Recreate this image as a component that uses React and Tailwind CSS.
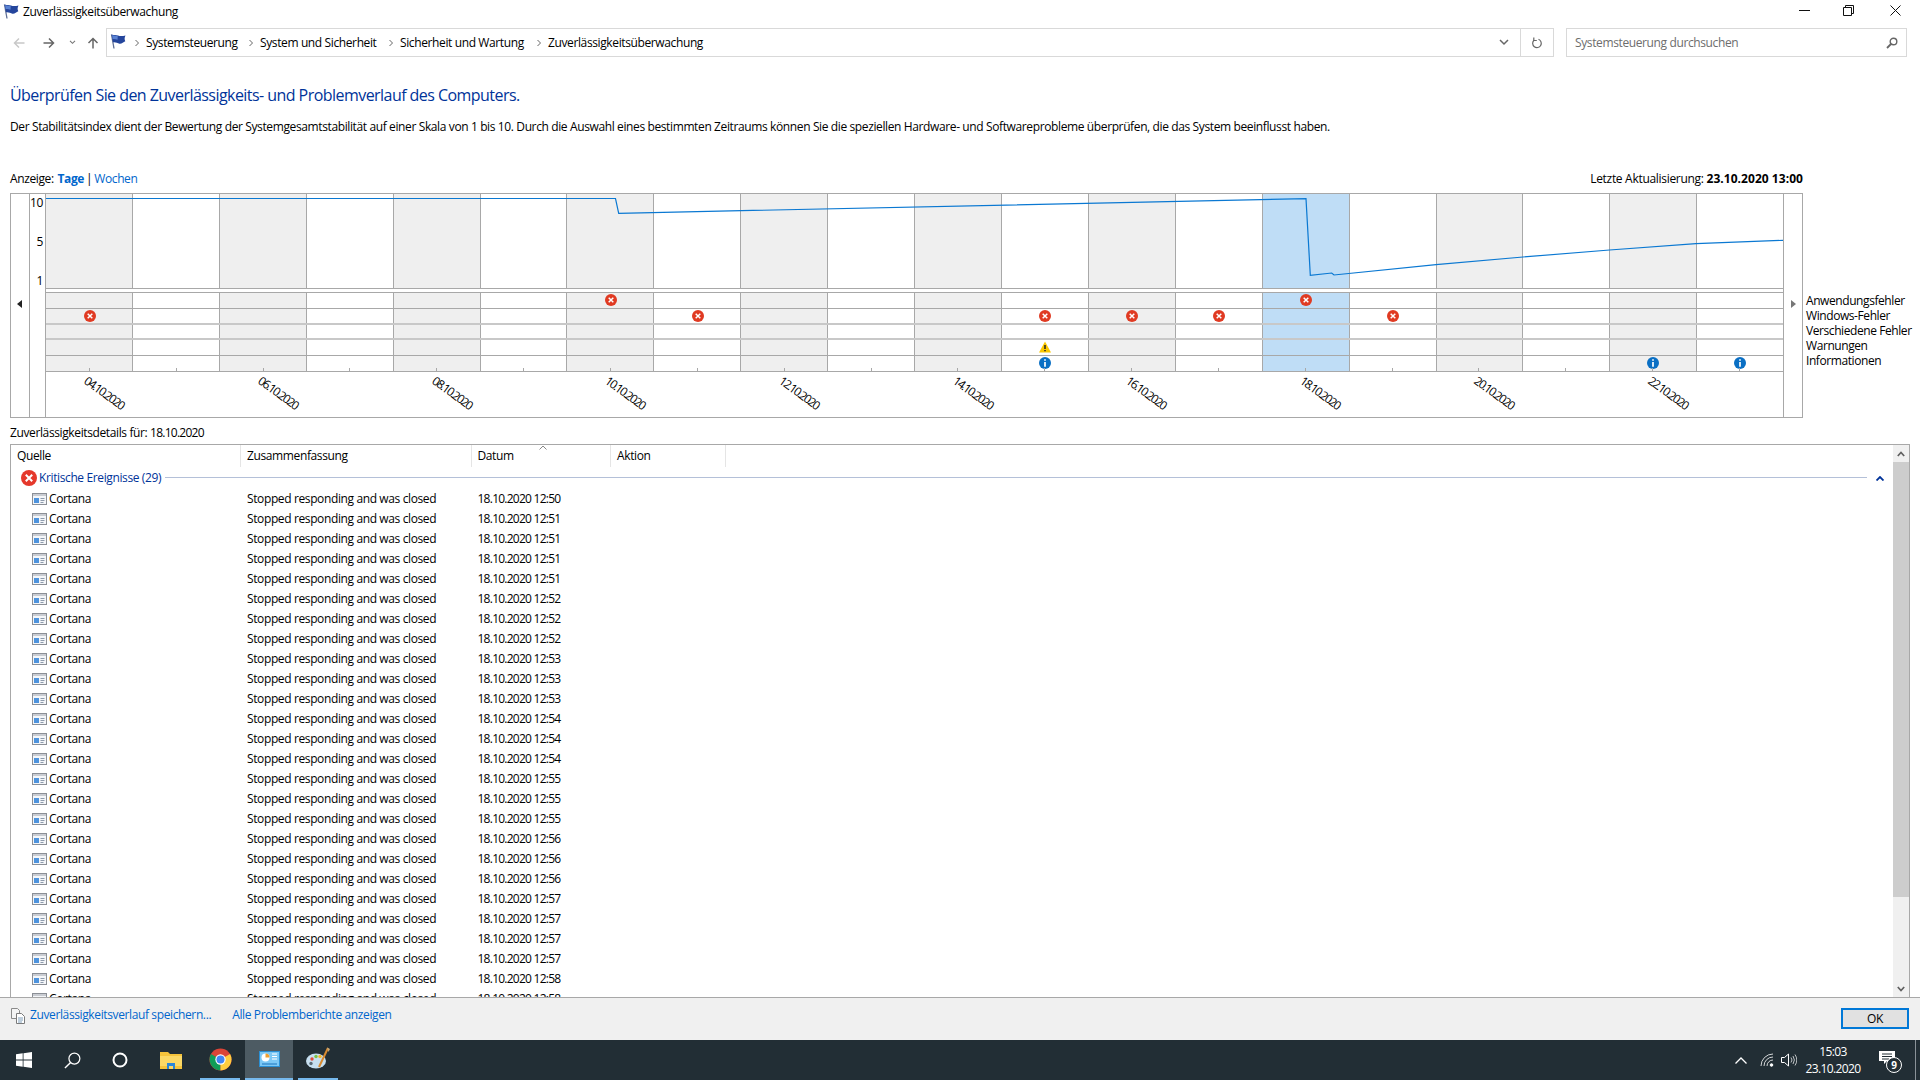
import React from 'react';

const times = ['12:50','12:51','12:51','12:51','12:51','12:52','12:52','12:52','12:53','12:53','12:53','12:54','12:54','12:54','12:55','12:55','12:55','12:56','12:56','12:56','12:57','12:57','12:57','12:57','12:58','12:58'];

const Flag = ({ className }) => (
  <svg viewBox="0 0 16 15" className={className}>
    <path d="M1.500 .5L4 14.500" stroke="#5f6f96" strokeWidth="1.300" />
    <path d="M1.500 .5C4.500 1.500 6 .8 8 1.500c2 .8 4.500.6 7.500 0-1 2-1.200 3.500-.2 5.800-2 .8-3.500 2.700-5.800 2.400C7.500 9.300 5.500 7.800 3 8.300z" fill="#24459c" />
    <path d="M2 1.200c2.500.6 4 .2 5.800 1l-.3 3.600C6 5.100 4.500 4.800 2.700 5.100z" fill="#5a82d2" />
  </svg>
);

const Chev = () => (
  <svg viewBox="0 0 6 8" className="w-[6px] h-[8px] shrink-0">
    <path d="M1.500 1l3 3-3 3" fill="none" stroke="#666" strokeWidth="1" />
  </svg>
);

const ErrorDot = ({ size = 12 }) => (
  <svg viewBox="0 0 12 12" width={size} height={size} className="block">
    <circle cx="6" cy="6" r="6" fill="#e03a22" />
    <path d="M3.700 3.700l4.600 4.600M8.300 3.700l-4.600 4.600" stroke="#fff" strokeWidth="1.500" />
  </svg>
);

const WarnDot = () => (
  <svg viewBox="0 0 12 12" width="12" height="12" className="block">
    <path d="M6 .5L12 11.500H0z" fill="#fcc800" />
    <path d="M6 4v4M6 9v1.300" stroke="#222" strokeWidth="1.500" />
  </svg>
);

const InfoDot = () => (
  <svg viewBox="0 0 12 12" width="12" height="12" className="block">
    <circle cx="6" cy="6" r="6" fill="#0a6fc4" />
    <path d="M6 2.300v1.400M6 5v4.800" stroke="#fff" strokeWidth="1.700" />
  </svg>
);

const Band = ({ i }) => {
  const sel = i === 14;
  const shade = i % 2 === 0;
  const bg = sel ? 'bg-[#bfddf6]' : shade ? 'bg-[#efefef]' : 'bg-white';
  return <div className={`flex-1 h-full ${bg} ${i > 0 ? 'border-l border-[#a8a8a8]' : ''}`} />;
};

const Bands = () => (
  <div className="absolute inset-0 flex">
    {Array.from({ length: 20 }, (_, i) => <Band key={i} i={i} />)}
  </div>
);

const events = {
  '0-6': 'e', '0-14': 'e',
  '1-0': 'e', '1-7': 'e', '1-11': 'e', '1-12': 'e', '1-13': 'e', '1-15': 'e',
  '3-11': 'w',
  '4-11': 'i', '4-18': 'i', '4-19': 'i',
};

const EventRow = ({ r }) => {
  const line = r === 0 || r === 3 ? 'border-b border-[#a8a8a8] h-[16px]' : r === 1 || r === 2 ? 'border-b-2 border-[#c8c8c8] h-[16px]' : 'h-[15px]';
  const pad = r >= 3 ? 'pb-[2px]' : '';
  return (
    <div className={`flex ${line} relative`}>
      {Array.from({ length: 20 }, (_, c) => {
        const k = events[`${r}-${c}`];
        return (
          <div key={c} className={`flex-1 flex items-center justify-center pl-[1px] ${pad}`}>
            {k === 'e' && <ErrorDot />}
            {k === 'w' && <WarnDot />}
            {k === 'i' && <InfoDot />}
          </div>
        );
      })}
    </div>
  );
};

const RowIcon = () => (
  <svg viewBox="0 0 15 12" className="w-[15px] h-[12px] shrink-0">
    <rect x=".5" y=".5" width="14" height="11" fill="#f4f6f9" stroke="#8b8f96" />
    <rect x="1" y="1" width="13" height="2" fill="#c9ccd2" />
    <rect x="2" y="5" width="5" height="5" fill="#4d93dd" />
    <path d="M8.500 5.500h4M8.500 7.500h4M8.500 9.500h3" stroke="#8d9aab" />
  </svg>
);

const Row = ({ t }) => (
  <div className="h-[20px] shrink-0 flex items-center whitespace-nowrap">
    <div className="w-[230px] pl-[21px] flex items-center gap-[2px]"><RowIcon /><span>Cortana</span></div>
    <div className="w-[230.500px] pl-[6px]">Stopped responding and was closed</div>
    <div className="pl-[6px] tracking-[-0.75px]">18.10.2020 {t}</div>
  </div>
);

const HeaderCell = ({ w, children, caret }) => (
  <div className={`${w} h-full flex items-center pl-[6px] border-r border-[#e5e5e5] relative`}>
    {children}
    {caret && (
      <svg viewBox="0 0 8 5" className="absolute left-[67px] top-[0px] w-[8px] h-[5px]">
        <path d="M.5 4.500L4 1l3.500 3.500" fill="none" stroke="#888" />
      </svg>
    )}
  </div>
);

export default function App() {
  return (
    <div className="w-[1920px] h-[1080px] overflow-hidden bg-white flex flex-col text-[12px] text-black tracking-[-0.38px]" style={{ fontFamily: '"Open Sans", "Noto Sans", sans-serif' }}>
      {/* Title */}
      <div className="h-[28px] shrink-0 flex items-start relative">
        <Flag className="w-[16px] h-[15px] ml-[3px] mt-[4px]" />
        <span className="ml-[4px] mt-[3px] leading-[17px]">Zuverlässigkeitsüberwachung</span>
        <div className="ml-auto flex items-center h-[20px] pr-[19px]">
          <svg viewBox="0 0 11 11" className="w-[11px] h-[11px]"><path d="M0 5.500h11" stroke="#111" /></svg>
          <svg viewBox="0 0 11 11" className="w-[11px] h-[11px] ml-[33px]"><path d="M2.500 2.500v-2h8v8h-2M.5 2.500h8v8h-8z" fill="none" stroke="#111" /></svg>
          <svg viewBox="0 0 11 11" className="w-[11px] h-[11px] ml-[36px]"><path d="M.5.5l10 10M10.500.5l-10 10" stroke="#111" /></svg>
        </div>
      </div>

      {/* Nav */}
      <div className="h-[29px] shrink-0 flex items-center">
        <div className="w-[106px] h-full flex items-center shrink-0 pl-[13px]">
          <svg viewBox="0 0 12 12" className="w-[12px] h-[12px]"><path d="M11.500 6h-10M6 1.500L1.500 6 6 10.500" fill="none" stroke="#c8c8c8" strokeWidth="1.500" /></svg>
          <svg viewBox="0 0 12 12" className="w-[12px] h-[12px] ml-[18px]"><path d="M.5 6h10M6 1.500L10.500 6 6 10.500" fill="none" stroke="#666" strokeWidth="1.500" /></svg>
          <svg viewBox="0 0 8 6" className="w-[7px] h-[5px] ml-[14px]"><path d="M1 1l3 3 3-3" fill="none" stroke="#777" strokeWidth="1.300" /></svg>
          <svg viewBox="0 0 12 12" className="w-[12px] h-[12px] ml-[11px]"><path d="M6 11.500v-10M1.500 6L6 1.500 10.500 6" fill="none" stroke="#666" strokeWidth="1.500" /></svg>
        </div>
        <div className="w-[1448px] h-full border border-[#d9d9d9] flex items-center whitespace-nowrap">
          <Flag className="w-[16px] h-[15px] ml-[3px] -mt-[2px]" />
          <div className="ml-[8px]"><Chev /></div>
          <div className="w-[94px] ml-[6px]">Systemsteuerung</div>
          <div className="ml-[8px]"><Chev /></div>
          <div className="w-[120px] ml-[6px]">System und Sicherheit</div>
          <div className="ml-[8px]"><Chev /></div>
          <div className="w-[128px] ml-[6px]">Sicherheit und Wartung</div>
          <div className="ml-[8px]"><Chev /></div>
          <div className="ml-[6px]">Zuverlässigkeitsüberwachung</div>
          <div className="ml-auto w-[33px] h-full flex items-center justify-center">
            <svg viewBox="0 0 10 7" className="w-[10px] h-[7px]"><path d="M1 1l4 4 4-4" fill="none" stroke="#666" strokeWidth="1.500" /></svg>
          </div>
          <div className="w-[33px] h-full border-l border-[#d9d9d9] flex items-center justify-center">
            <svg viewBox="0 0 12 12" className="w-[12px] h-[12px]"><path d="M7.500 2.300A4.300 4.300 0 1 1 3 3.200" fill="none" stroke="#666" strokeWidth="1.200" /><path d="M2.800 .5v3h3" fill="none" stroke="#666" strokeWidth="1.200" /></svg>
          </div>
        </div>
        <div className="w-[341px] ml-[12px] h-full border border-[#d9d9d9] flex items-center pl-[8px] pr-[8px] text-[#6d6d6d]">
          <span>Systemsteuerung durchsuchen</span>
          <svg viewBox="0 0 12 12" className="w-[12px] h-[12px] ml-auto"><circle cx="7.500" cy="4.500" r="3.300" fill="none" stroke="#666" strokeWidth="1.400" /><path d="M5 7l-4 4" stroke="#666" strokeWidth="1.800" /></svg>
        </div>
      </div>

      {/* Heading */}
      <div className="h-[22px] mt-[27px] ml-[10px] shrink-0 text-[16px] leading-[22px] text-[#003399] whitespace-nowrap tracking-[-0.55px]">
        Überprüfen Sie den Zuverlässigkeits- und Problemverlauf des Computers.
      </div>
      <div className="h-[20px] mt-[11px] ml-[10px] shrink-0 leading-[20px] whitespace-nowrap">
        Der Stabilitätsindex dient der Bewertung der Systemgesamtstabilität auf einer Skala von 1 bis 10. Durch die Auswahl eines bestimmten Zeitraums können Sie die speziellen Hardware- und Softwareprobleme überprüfen, die das System beeinflusst haben.
      </div>

      {/* Anzeige */}
      <div className="h-[20px] mt-[32px] ml-[10px] w-[1793px] shrink-0 flex items-center whitespace-nowrap">
        <span className="pr-[1px]">Anzeige:&nbsp;</span>
        <span className="font-bold text-[#0066cc]">Tage</span>
        <span className="px-[2px]">|</span>
        <span className="text-[#0066cc]">Wochen</span>
        <span className="ml-auto tracking-[-0.3px]">Letzte Aktualisierung: <b className="font-bold tracking-[0.05px]">23.10.2020 13:00</b></span>
      </div>

      <div className="flex mt-[4px] shrink-0 h-[225px]">
        {/* Frame */}
        <div className="ml-[10px] w-[1793px] h-full border border-[#a8a8a8] flex shrink-0">
          <div className="w-[19px] border-r border-[#a8a8a8] flex items-center justify-center pb-[4px] pr-[2px] shrink-0">
            <svg viewBox="0 0 5 8" className="w-[5px] h-[8px]"><path d="M5 0L0 4l5 4z" fill="#222" /></svg>
          </div>
          <div className="w-[16px] border-r border-[#a8a8a8] shrink-0 flex flex-col items-end pr-[2px] h-[95px] justify-between">
            <span className="leading-[17px]">10</span>
            <span className="leading-[17px]">5</span>
            <span className="leading-[17px]">1</span>
          </div>
          <div className="w-[1737px] shrink-0 flex flex-col relative">
            <div className="absolute left-[-16px] top-[95px] bottom-0 w-[16px] bg-white border-r border-[#a8a8a8]" />
            <div className="h-[95px] shrink-0 relative border-b border-[#a8a8a8]">
              <Bands />
              <svg viewBox="0 0 1737 94" className="absolute inset-0 w-[1737px] h-[94px] overflow-visible" fill="none">
                <path d="M0 4.500H569.500L572.700 19.300L1260 4.700L1264.300 81.300L1285.700 79L1288 81L1390 70.700L1477 63L1563.500 56L1650 49.700L1737 46.300" stroke="#0a78d2" strokeWidth="1.200" />
              </svg>
            </div>
            <div className="h-[3px] shrink-0 bg-white" />
            <div className="h-[80px] shrink-0 relative border-y border-[#a8a8a8]">
              <Bands />
              <div className="absolute inset-0 flex flex-col">
                {[0, 1, 2, 3, 4].map(r => <EventRow key={r} r={r} />)}
              </div>
            </div>
            <div className="flex-1 flex overflow-visible">
              {Array.from({ length: 20 }, (_, i) => (
                <div key={i} className="flex-1 flex flex-col items-center">
                  <div className="w-px h-[4px] -mt-[4px] bg-[#a8a8a8] relative" />
                  {i % 2 === 0 && (
                    <div className="w-0 flex justify-center mt-[12px] whitespace-nowrap">
                      <span className="rotate-[36deg] translate-x-[15px] block tracking-[-1.5px]">
                        {String(4 + i).padStart(2, '0')}.10.2020
                      </span>
                    </div>
                  )}
                </div>
              ))}
            </div>
          </div>
          <div className="flex-1 border-l border-[#a8a8a8] flex items-center justify-center pb-[4px]">
            <svg viewBox="0 0 5 8" className="w-[5px] h-[8px]"><path d="M0 0l5 4-5 4z" fill="#777" /></svg>
          </div>
        </div>
        <div className="ml-[3px] pt-[100px] text-[12px] leading-[15px] whitespace-nowrap tracking-[-0.42px]">
          <div>Anwendungsfehler</div>
          <div>Windows-Fehler</div>
          <div>Verschiedene Fehler</div>
          <div>Warnungen</div>
          <div>Informationen</div>
        </div>
      </div>

      <div className="h-[20px] mt-[5px] ml-[10px] shrink-0 leading-[20px]">Zuverlässigkeitsdetails für: <span className="tracking-[-0.75px]">18.10.2020</span></div>

      {/* List */}
      <div className="h-[553px] mt-[1px] mx-[10px] w-[1900px] border border-b-0 border-[#a8a8a8] flex shrink-0 overflow-hidden">
        <div className="flex-1 flex flex-col min-w-0 overflow-hidden">
          <div className="h-[22px] shrink-0 flex">
            <HeaderCell w="w-[230px]">Quelle</HeaderCell>
            <HeaderCell w="w-[230.500px]">Zusammenfassung</HeaderCell>
            <HeaderCell w="w-[139.500px]" caret>Datum</HeaderCell>
            <HeaderCell w="w-[115px]">Aktion</HeaderCell>
          </div>
          <div className="h-[22px] shrink-0 flex items-center pl-[10px] relative">
            <svg viewBox="0 0 16 16" className="w-[16px] h-[16px] shrink-0">
              <circle cx="8" cy="8" r="8" fill="#e5382b" />
              <path d="M4.800 4.800l6.400 6.400M11.200 4.800l-6.400 6.400" stroke="#fff" strokeWidth="2" />
            </svg>
            <span className="ml-[2px] text-[#003399] whitespace-nowrap">Kritische Ereignisse (29)</span>
            <div className="flex-1 h-px bg-[#b4c0d8] ml-[4px] -mt-[2px]" />
            <div className="w-[26px] flex justify-center">
              <svg viewBox="0 0 8 5" className="w-[8px] h-[5px]"><path d="M.5 4.500L4 1l3.500 3.500" fill="none" stroke="#003399" strokeWidth="1.800" /></svg>
            </div>
          </div>
          <div className="flex flex-col">
            {times.map((t, i) => <Row key={i} t={t} />)}
          </div>
        </div>
        <div className="w-[16px] shrink-0 flex flex-col bg-[#f0f0f0]">
          <div className="h-[17px] flex items-center justify-center">
            <svg viewBox="0 0 8 6" className="w-[8px] h-[6px]"><path d="M.8 5L4 1.500 7.200 5" fill="none" stroke="#606060" strokeWidth="1.700" /></svg>
          </div>
          <div className="h-[435px] bg-[#cdcdcd]" />
          <div className="flex-1" />
          <div className="h-[17px] flex items-center justify-center">
            <svg viewBox="0 0 8 6" className="w-[8px] h-[6px]"><path d="M.8 1L4 4.500 7.200 1" fill="none" stroke="#606060" strokeWidth="1.700" /></svg>
          </div>
        </div>
      </div>

      {/* Footer */}
      <div className="flex-1 bg-[#f0f0f0] border-t border-[#a8a8a8] flex items-start pt-[10px] relative">
        <svg viewBox="0 0 14 16" className="w-[14px] h-[16px] ml-[11px] shrink-0">
          <path d="M.5.5h6l2 2v8h-8z" fill="#f4f4f4" stroke="#8a8a8a" />
          <path d="M5.500 5.500h5l3 3v7h-8z" fill="#fff" stroke="#7a7a7a" />
          <path d="M7 10h5M7 12h5M7 14h4" stroke="#7f9db8" />
        </svg>
        <span className="ml-[5px] -mt-[2px] text-[#0066cc] leading-[17px] whitespace-nowrap">Zuverlässigkeitsverlauf speichern...</span>
        <span className="ml-[21px] -mt-[2px] text-[#0066cc] leading-[17px] whitespace-nowrap">Alle Problemberichte anzeigen</span>
        <div className="ml-auto mr-[11px] w-[68px] h-[21px] border-2 border-[#0078d7] bg-[#e1e1e1] flex items-center justify-center">OK</div>
      </div>

      {/* Taskbar */}
      <div className="h-[40px] shrink-0 bg-[#222e35] flex items-center text-white">
        <div className="w-[48px] h-full flex items-center justify-center">
          <svg viewBox="0 0 16 16" className="w-[16px] h-[16px]"><path d="M0 2.300L6.700 1.300V7.600H0zM7.500 1.200L16 0V7.600H7.500zM0 8.400H6.700V14.700L0 13.700zM7.500 8.400H16V16L7.500 14.800z" fill="#fff" /></svg>
        </div>
        <div className="w-[48px] h-full flex items-center justify-center">
          <svg viewBox="0 0 18 18" className="w-[17px] h-[17px]"><circle cx="11" cy="7" r="5.800" fill="none" stroke="#fff" strokeWidth="1.300" /><path d="M7 11.200L1 17" stroke="#fff" strokeWidth="1.500" /></svg>
        </div>
        <div className="w-[48px] h-full flex items-center justify-center">
          <svg viewBox="0 0 16 16" className="w-[16px] h-[16px]"><circle cx="8" cy="8" r="6.500" fill="none" stroke="#fff" strokeWidth="2" /></svg>
        </div>
        <div className="w-[56px] h-full flex items-center justify-center pr-[2px]">
          <svg viewBox="0 0 22 18" className="w-[22px] h-[18px]"><path d="M0 1h8l2 2h12v15H0z" fill="#f5c33b" /><path d="M0 5h22v13H0z" fill="#fbd865" /><path d="M7 12h8v6h-2v-3H9v3H7z" fill="#2a86d8" /><path d="M0 15h7v3H0zM15 15h7v3h-7z" fill="#f5c33b" /></svg>
        </div>
        <div className="w-[40px] mr-[5px] h-full flex items-center justify-center border-b-2 border-[#76b9ed]">
          <svg viewBox="0 0 24 24" className="w-[23px] h-[23px]">
            <circle cx="12" cy="12" r="11.500" fill="#db4437" />
            <path d="M12 12L2.100 6.300A11.500 11.500 0 0 0 12 23.500z" fill="#0f9d58" />
            <path d="M12 12l10-5.700A11.500 11.500 0 0 1 12 23.500z" fill="#ffcd40" />
            <circle cx="12" cy="12" r="5.400" fill="#fff" />
            <circle cx="12" cy="12" r="4.200" fill="#4285f4" />
          </svg>
        </div>
        <div className="w-[48px] h-full flex items-center justify-center bg-[#4d5b63] border-b-2 border-[#76b9ed]">
          <svg viewBox="0 0 21 16" className="w-[21px] h-[16px]">
            <rect width="21" height="16" fill="#45b0ee" />
            <rect x=".5" y=".5" width="20" height="15" fill="#7cc8f5" stroke="#2a8fd4" />
            <circle cx="6.500" cy="6.500" r="4" fill="#fff" />
            <path d="M6.500 6.500v-4a4 4 0 0 1 4 4z" fill="#f0a030" />
            <path d="M13 3h5M13 5.500h5M13 8h5" stroke="#fff" />
            <path d="M3 13h15" stroke="#1c74bd" />
          </svg>
        </div>
        <div className="w-[40px] ml-[5px] h-full flex items-center justify-center border-b-2 border-[#76b9ed]">
          <svg viewBox="0 0 24 24" className="w-[24px] h-[24px]">
            <ellipse cx="10" cy="14" rx="10" ry="7.500" fill="#c6dff0" />
            <circle cx="6" cy="12" r="1.700" fill="#e04a35" />
            <circle cx="10" cy="9.500" r="1.700" fill="#7ac143" />
            <circle cx="14" cy="9.500" r="1.700" fill="#f3b62b" />
            <circle cx="5" cy="16.500" r="1.700" fill="#5b6b78" />
            <path d="M22 1L13 20" stroke="#d88a30" strokeWidth="2" />
            <path d="M21 .5l3 1.500-1.500 3z" fill="#c8a878" />
          </svg>
        </div>
        <div className="ml-auto flex items-center h-full">
          <svg viewBox="0 0 12 7" className="w-[12px] h-[7px] mr-[13px]"><path d="M.5 6.500L6 1l5.500 5.500" fill="none" stroke="#fff" strokeWidth="1.300" /></svg>
          <svg viewBox="0 0 14 14" className="w-[14px] h-[14px] mr-[7px]" fill="none" stroke="#fff"><path d="M1 13A12 12 0 0 1 13 1" opacity=".8" /><path d="M4 13A9 9 0 0 1 13 4" opacity=".8" /><path d="M7 13A6 6 0 0 1 13 7" opacity=".8" /><circle cx="11.500" cy="12" r="1.300" fill="#fff" /></svg>
          <svg viewBox="0 0 16 14" className="w-[16px] h-[14px]" fill="none" stroke="#fff"><path d="M.5 4.500h3l4-3.500v12l-4-3.500h-3z" /><path d="M10 4.500a4 4 0 0 1 0 5M12 3a7 7 0 0 1 0 8M14 1.500a10 10 0 0 1 0 11" opacity=".7" /></svg>
          <div className="w-[72px] flex flex-col items-center leading-[17px] text-white tracking-[-0.6px]">
            <span>15:03</span>
            <span>23.10.2020</span>
          </div>
          <div className="w-[16px] ml-[10px] relative h-[18px]">
            <svg viewBox="0 0 16 14" className="w-[16px] h-[14px] absolute top-0 left-0"><path d="M0 0h16v10H8l-3 3v-3H0z" fill="#fff" /><path d="M3 3h10M3 5.500h10M3 8h7" stroke="#222e35" /></svg>
            <div className="absolute left-[7px] top-[6px] w-[16px] h-[16px] rounded-full bg-[#222e35] border border-white flex items-center justify-center text-[10px] font-bold">9</div>
          </div>
          <div className="w-[20px]" />
          <div className="w-px h-full bg-[#8a9298]" />
          <div className="w-[4px]" />
        </div>
      </div>
    </div>
  );
}
